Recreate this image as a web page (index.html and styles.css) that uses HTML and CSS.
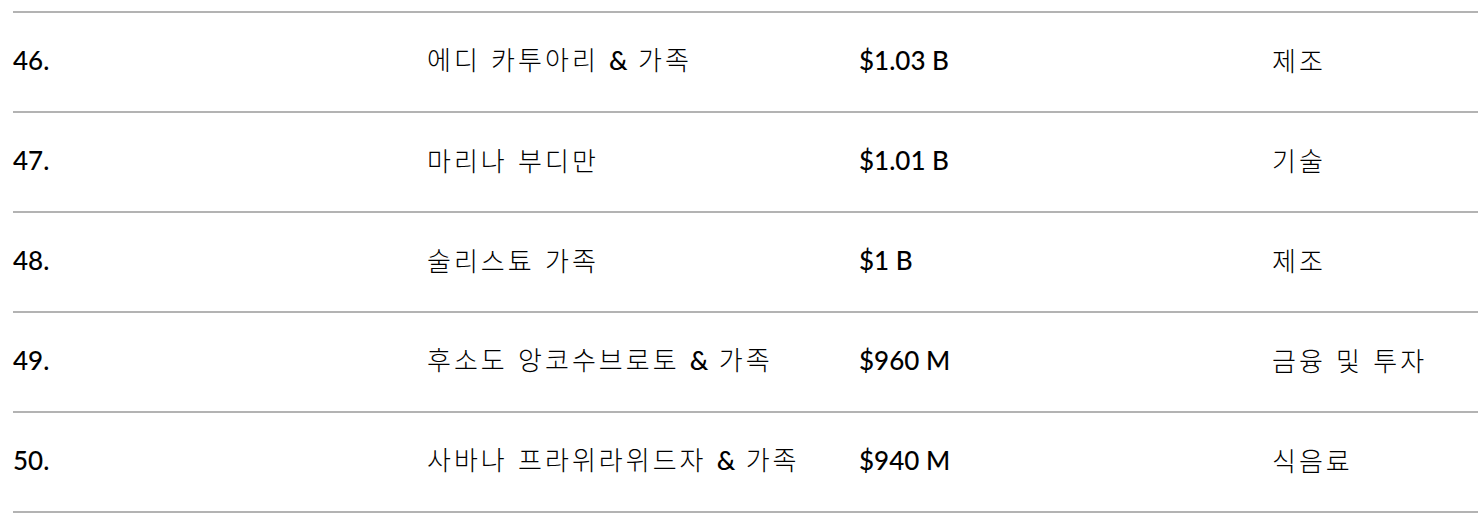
FILE: index.html
```html
<!DOCTYPE html>
<html lang="ko">
<head>
<meta charset="utf-8">
<link rel="stylesheet" href="styles.css">
</head>
<body>
<div class="table">
  <div class="row"><div class="rank">46.</div><div class="name">에디 카투아리 <span class="amp">&amp;</span> 가족</div><div class="worth">$1.03 B</div><div class="cat">제조</div></div>
  <div class="row"><div class="rank">47.</div><div class="name">마리나 부디만</div><div class="worth">$1.01 B</div><div class="cat">기술</div></div>
  <div class="row"><div class="rank">48.</div><div class="name">술리스툐 가족</div><div class="worth">$1 B</div><div class="cat">제조</div></div>
  <div class="row"><div class="rank">49.</div><div class="name">후소도 앙코수브로토 <span class="amp">&amp;</span> 가족</div><div class="worth">$960 M</div><div class="cat">금융 및 투자</div></div>
  <div class="row"><div class="rank">50.</div><div class="name">사바나 프라위라위드자 <span class="amp">&amp;</span> 가족</div><div class="worth">$940 M</div><div class="cat">식음료</div></div>
</div>
</body>
</html>
```

FILE: styles.css
```css
html, body {
  margin: 0;
  background: #ffffff;
}
body {
  padding: 11px 1px 0 13px;
  font-family: "Lato", "Noto Sans CJK KR", sans-serif;
  font-size: 26px;
  color: #000000;
}
.table {
  display: flex;
  flex-direction: column;
  border-bottom: 2px solid #b3b3b3;
}
.row {
  display: grid;
  grid-template-columns: 414px 432px 413px 1fr;
  align-items: center;
  height: 98px;
  box-sizing: content-box;
  border-top: 2px solid #b3b3b3;
}
.row > div {
  line-height: 30px;
  margin-bottom: 5px;
}
.rank, .worth {
  font-weight: 500;
}
.name, .cat {
  font-family: "Noto Sans CJK KR", sans-serif;
  font-weight: 300;
  font-size: 26px;
  letter-spacing: 3px;
}
.amp {
  font-family: "Lato", sans-serif;
  font-weight: 500;
  letter-spacing: 0;
}
```
